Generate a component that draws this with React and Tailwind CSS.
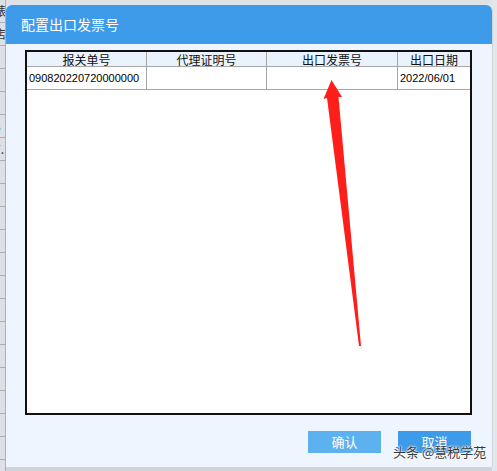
const FONT = { fontFamily: '"Noto Sans CJK SC", "Liberation Sans", sans-serif' }

const COLS = [
  { title: '报关单号', w: 'w-[120px]', value: '090820220720000000', align: 'text-left pl-[2px]' },
  { title: '代理证明号', w: 'w-[120px]', value: '', align: 'text-center' },
  { title: '出口发票号', w: 'w-[131px]', value: '', align: 'text-center' },
  { title: '出口日期', w: 'flex-1', value: '2022/06/01', align: 'text-left pl-[2px]' },
]

const BACK_ROWS = ['裱', '店', '', '', '', '8', '7.', '', '', '', '', '', '', '', '', '', '', '', '', '']

export default function App() {
  return (
    <div className="relative flex h-[471px] w-[497px] overflow-hidden bg-[#e4e7ea]" style={FONT}>
      {/* window behind the dialog */}
      <div className="flex w-[6px] shrink-0 flex-col border-r border-[#a9b0b8] bg-[#dde1e6]">
        {BACK_ROWS.map((t, i) => (
          <div key={i} className="flex h-[23px] shrink-0 items-center overflow-hidden border-b border-[#a9b0b8] text-[12px] text-[#333] leading-none">
            <span className="-ml-[6px]">{t}</span>
          </div>
        ))}
      </div>

      <div className="flex flex-col">
        <div className="h-[5px] shrink-0 bg-[#dfe2e6]" />
        <div className="flex h-[462px] w-[486px] flex-col rounded-t-[6px] bg-[#eef5fe] shadow-[1px_0_0_#cfd6de]">
          <div className="flex h-[39px] shrink-0 items-center rounded-t-[6px] bg-[#3d9be9] pl-[15px] text-[14px] text-white">
            配置出口发票号
          </div>

          <div className="flex flex-1 flex-col px-[19px] pt-[6px]">
            <div className="flex h-[365px] w-[447px] flex-col border-2 border-[#111] bg-white">
              <div className="flex h-[15px] border-b border-[#a6a6a6] bg-[#eaf3fd] text-[12px] leading-[15px] text-[#111]">
                {COLS.map((c, i) => (
                  <div key={c.title} className={`${c.w} ${i < 3 ? 'border-r border-[#a6a6a6]' : ''} text-center`}>
                    {c.title}
                  </div>
                ))}
              </div>
              <div className="flex h-[23px] border-b border-[#a6a6a6] text-[11px] leading-[22px] text-black" style={{ fontFamily: '"Liberation Sans", sans-serif' }}>
                {COLS.map((c, i) => (
                  <div key={c.title} className={`${c.w} ${i < 3 ? 'border-r border-[#a6a6a6]' : ''} ${c.align}`}>
                    {c.value}
                  </div>
                ))}
              </div>
            </div>

            <div className="mt-[16px] flex justify-end gap-[17px] pr-[2px]">
              <button className="h-[22px] w-[73px] bg-[#5eb1ef] text-[13px] text-white">确认</button>
              <button className="h-[22px] w-[73px] bg-[#3d9be9] text-[13px] text-white">取消</button>
            </div>
          </div>
        </div>
        <div className="flex-1 bg-[#cfd4d9]" />
      </div>

      {/* red annotation arrow */}
      <svg className="pointer-events-none absolute left-0 top-0" width="497" height="471" viewBox="0 0 497 471">
        <polygon
          points="331.5,80 342,97 338.5,97 361,346 359,346 327,98 323.5,99"
          fill="#ff1f1a"
        />
      </svg>

      {/* watermark */}
      <div
        className="pointer-events-none absolute left-[393px] top-[445px] text-[13px] leading-none text-[#3a3a3a]"
        style={{ textShadow: '0 0 2px #fff, 0 0 2px #fff, 0 0 1px #fff' }}
      >
        头条 @慧税学苑
      </div>
    </div>
  )
}
